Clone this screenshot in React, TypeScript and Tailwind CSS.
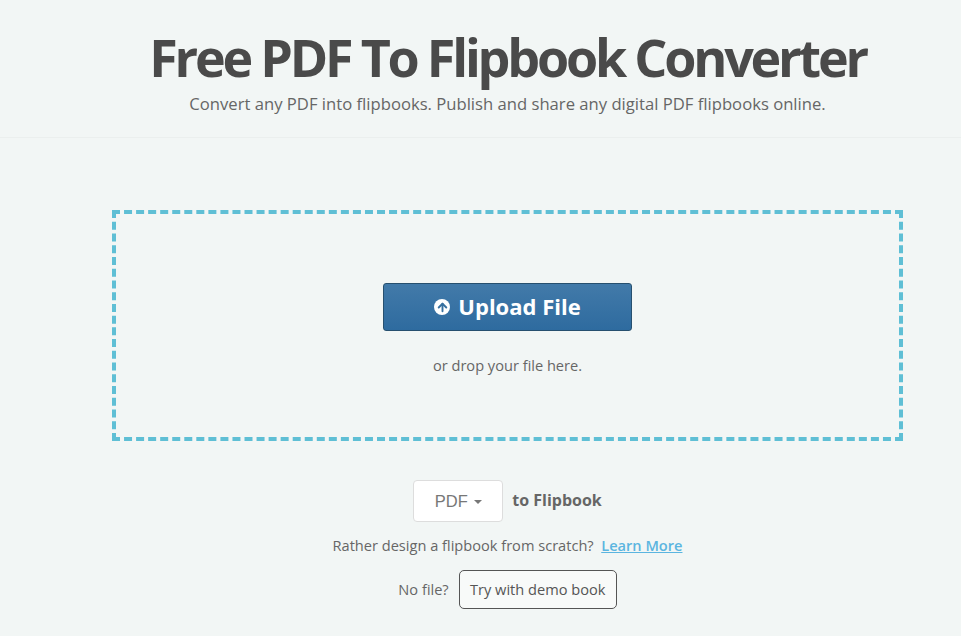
import { ArrowUp } from 'lucide-react'

const font = { fontFamily: '"Open Sans", sans-serif' }

const App = () => {
  return (
    <div style={font} className="h-[636px] overflow-hidden bg-[#f2f6f5] text-[#666]">
      <header className="h-[138px] border-b border-[#ebefee] pl-[112px] pr-[58px] pt-[24px] text-center">
        <h1 className="text-[52px] leading-[66px] font-bold tracking-[-3.2px] text-[#4a4a4a]">Free PDF To Flipbook Converter</h1>
        <p className="text-[16.65px] leading-[24px] mt-[2px]">Convert any PDF into flipbooks. Publish and share any digital PDF flipbooks online.</p>
      </header>

      <main className="pl-[112px] pr-[58px] pt-[72px]">
        <div className="h-[231px] border-4 border-dashed border-[#5fbfd5] flex flex-col items-center pt-[69px]">
          <button className="w-[249px] h-[48px] rounded-[3px] border border-[#27506f] bg-gradient-to-b from-[#427aa9] to-[#2e6b9f] text-white text-[22px] font-bold flex items-center justify-center gap-[8px]">
            <span className="w-[16px] h-[16px] rounded-full bg-white flex items-center justify-center">
              <ArrowUp size={13} strokeWidth={3.5} className="text-[#37709f]" />
            </span>
            <span className="-translate-y-[1px]">Upload File</span>
          </button>
          <p className="text-[14.6px] leading-[20px] mt-[24px]">or drop your file here.</p>
        </div>

        <div className="flex items-center justify-center mt-[39px] h-[42px]">
          <button className="w-[90px] h-[42px] rounded-[4px] border border-[#dddddd] bg-white text-[16.5px] text-[#777] flex items-center justify-center gap-[6px]" style={{ fontFamily: '"Liberation Sans", sans-serif' }}>
            PDF
            <span className="w-0 h-0 border-x-[4px] border-x-transparent border-t-[4px] border-t-[#777] translate-y-[1px]" />
          </button>
          <span className="ml-[9px] text-[16px] font-bold -translate-y-[1px]">to Flipbook</span>
        </div>

        <p className="text-center text-[14.6px] leading-[20px] mt-[13px]">
          Rather design a flipbook from scratch?&nbsp; <a className="font-semibold text-[#5bb5e0] underline" href="#">Learn More</a>
        </p>

        <div className="flex items-center justify-center gap-[10px] mt-[15px]">
          <span className="text-[14.6px]">No file?</span>
          <button className="h-[39px] w-[158px] rounded-[5px] border border-[#555] bg-[#f8faf9] text-[14.6px] text-[#555]">Try with demo book</button>
        </div>
      </main>
    </div>
  )
}

export default App
